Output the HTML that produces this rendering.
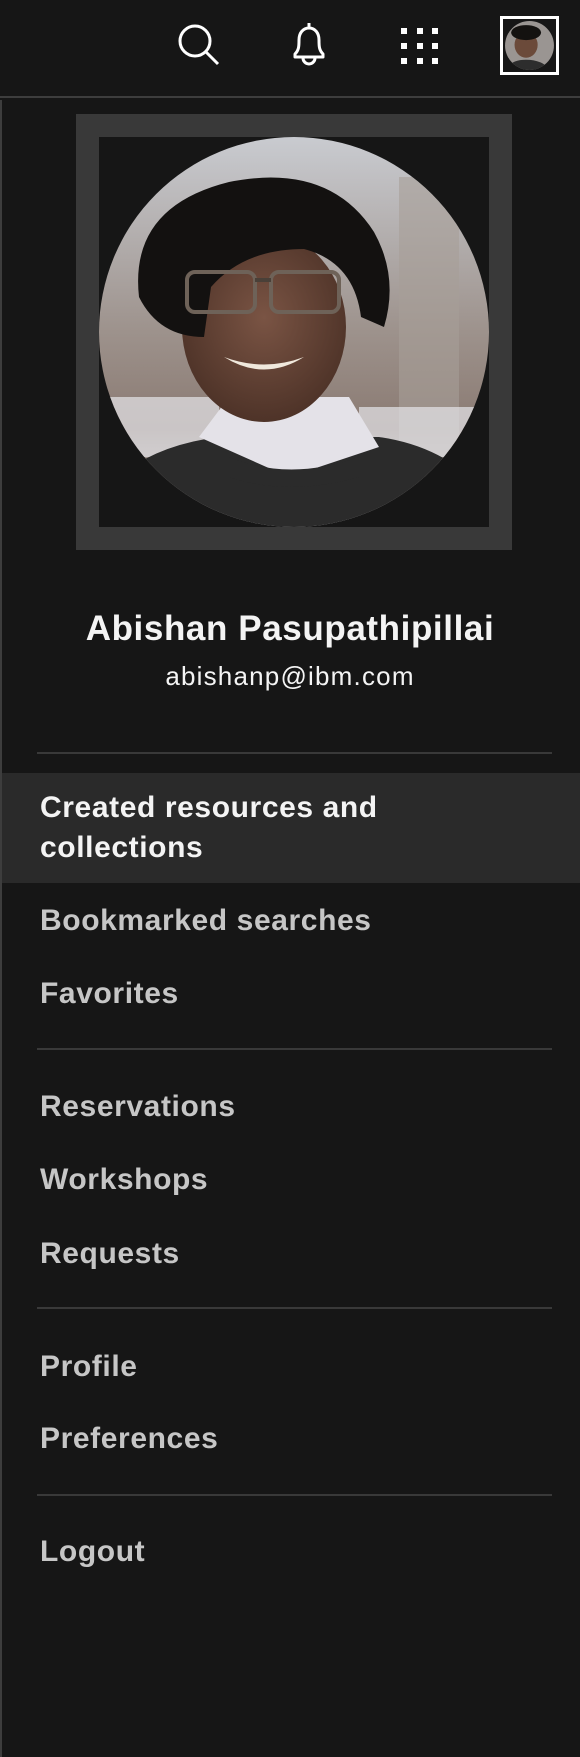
<!DOCTYPE html>
<html><head><meta charset="utf-8"><style>
*{margin:0;padding:0;box-sizing:border-box}
body{width:580px;height:1757px;background:#161616;position:relative;overflow:hidden;font-family:"Liberation Sans",sans-serif}
.hdr{position:absolute;left:0;top:0;width:580px;height:98px;background:#161616;border-bottom:2px solid #3d3d3d}
.lb{position:absolute;left:0;top:100px;width:2px;height:1657px;background:#3d3d3d}
.t{position:absolute;white-space:nowrap}
.item{position:absolute;left:40px;font-size:30px;font-weight:bold;color:#c6c6c6;line-height:1;letter-spacing:0.6px}
.div{position:absolute;left:37px;width:515px;height:2px;background:#393939}
</style></head><body>
<div class="hdr"></div>
<div class="lb"></div>
<svg style="position:absolute;left:176px;top:22px" width="46" height="46" viewBox="0 0 46 46"><circle cx="19" cy="19" r="15" fill="none" stroke="#fff" stroke-width="3"/><line x1="30" y1="30" x2="42" y2="42" stroke="#fff" stroke-width="3"/></svg>
<svg style="position:absolute;left:287px;top:20px" width="44" height="48" viewBox="0 0 44 48"><path d="M22 3v4M8 34c4-4 4-8 4-14c0-7 4-12 10-12s10 5 10 12c0 6 0 10 4 14v3H8z" fill="none" stroke="#fff" stroke-width="3" stroke-linejoin="round"/><path d="M16 38a6 6 0 0 0 12 0" fill="none" stroke="#fff" stroke-width="3"/></svg>
<svg style="position:absolute;left:401px;top:28px" width="38" height="36" viewBox="0 0 38 36" fill="#fff"><rect x="0" y="0" width="6" height="6"/><rect x="16" y="0" width="6" height="6"/><rect x="31" y="0" width="6" height="6"/><rect x="0" y="15" width="6" height="6"/><rect x="16" y="15" width="6" height="6"/><rect x="31" y="15" width="6" height="6"/><rect x="0" y="30" width="6" height="6"/><rect x="16" y="30" width="6" height="6"/><rect x="31" y="30" width="6" height="6"/></svg>
<div style="position:absolute;left:500px;top:16px;width:59px;height:59px;border:3px solid #fff;background:#161616">
<svg width="53" height="53" viewBox="0 0 390 390" style="display:block"><defs><clipPath id="c2"><circle cx="195" cy="195" r="180"/></clipPath></defs><g clip-path="url(#c2)"><rect width="390" height="390" fill="#9a9592"/><ellipse cx="170" cy="190" rx="85" ry="95" fill="#6b4a3a"/><ellipse cx="170" cy="100" rx="110" ry="55" fill="#141210"/><path d="M20 390 Q40 300 170 300 Q300 300 360 390Z" fill="#2d2d2d"/></g></svg></div>

<div style="position:absolute;left:76px;top:114px;width:436px;height:436px;background:#393939"></div>
<div style="position:absolute;left:99px;top:137px;width:390px;height:390px;background:#161616"></div>
<svg style="position:absolute;left:99px;top:137px" width="390" height="390" viewBox="0 0 390 390">
<defs><clipPath id="c"><circle cx="195" cy="195" r="195"/></clipPath>
<linearGradient id="bg" x1="0" y1="0" x2="0" y2="1"><stop offset="0" stop-color="#c9cbd0"/><stop offset=".5" stop-color="#9d928c"/><stop offset=".75" stop-color="#8a7a72"/><stop offset="1" stop-color="#d8d8da"/></linearGradient>
<radialGradient id="fc" cx=".5" cy=".45" r=".55"><stop offset="0" stop-color="#7a5444"/><stop offset="1" stop-color="#4e3328"/></radialGradient></defs>
<g clip-path="url(#c)">
<rect width="390" height="390" fill="url(#bg)"/>
<rect x="300" y="40" width="60" height="300" fill="#a69e98" opacity=".6"/>
<rect x="0" y="260" width="120" height="60" fill="#e6e6ea" opacity=".7"/>
<rect x="260" y="270" width="130" height="50" fill="#e6e6ea" opacity=".7"/>
<path d="M0 390 L0 360 Q40 310 120 300 L280 300 Q350 310 390 360 L390 390Z" fill="#2b2b2b"/>
<path d="M100 300 L130 260 L250 260 L280 310 L190 340Z" fill="#e4e2e8"/>
<path d="M130 320 Q190 345 260 320 L260 340 Q190 360 130 340Z" fill="#2b2b2b"/>
<ellipse cx="165" cy="190" rx="82" ry="95" fill="url(#fc)"/>
<path d="M40 160 Q30 70 130 45 Q230 25 275 95 Q300 140 285 190 L262 180 Q255 125 205 112 Q145 112 112 150 L105 200 Q60 200 40 160Z" fill="#131110"/>
<rect x="88" y="135" width="68" height="40" rx="8" fill="none" stroke="#6e6258" stroke-width="4"/>
<rect x="172" y="135" width="68" height="40" rx="8" fill="none" stroke="#6e6258" stroke-width="4"/>
<line x1="156" y1="143" x2="172" y2="143" stroke="#4a4038" stroke-width="4"/>
<path d="M125 220 Q165 245 205 220 Q165 235 125 220Z" fill="#f0e8dc"/>
</g></svg>

<div class="t" style="left:0;width:580px;text-align:center;top:611px;font-size:35px;font-weight:bold;color:#f4f4f4;line-height:1;letter-spacing:0.6px">Abishan Pasupathipillai</div>
<div class="t" style="left:0;width:580px;text-align:center;top:663px;font-size:26px;color:#f4f4f4;line-height:1;letter-spacing:1.2px">abishanp@ibm.com</div>

<div class="div" style="top:752px"></div>
<div style="position:absolute;left:2px;top:773px;width:578px;height:110px;background:#2a2a2a"></div>
<div class="item" style="color:#f4f4f4;line-height:40px;top:788px">Created resources and<br>collections</div>
<div class="item" style="top:906px">Bookmarked searches</div>
<div class="item" style="top:979px">Favorites</div>
<div class="div" style="top:1048px"></div>
<div class="item" style="top:1092px">Reservations</div>
<div class="item" style="top:1165px">Workshops</div>
<div class="item" style="top:1239px">Requests</div>
<div class="div" style="top:1307px"></div>
<div class="item" style="top:1352px">Profile</div>
<div class="item" style="top:1424px">Preferences</div>
<div class="div" style="top:1494px"></div>
<div class="item" style="top:1537px">Logout</div>
</body></html>
